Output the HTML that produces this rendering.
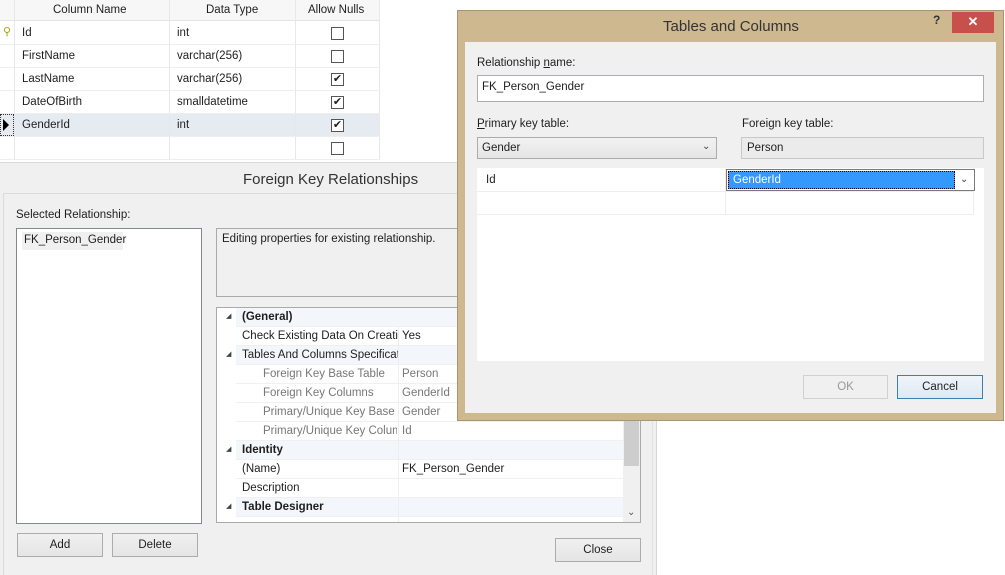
<!DOCTYPE html>
<html><head><style>
*{box-sizing:border-box;margin:0;padding:0}
body{width:1005px;height:575px;overflow:hidden;background:#fff;font-family:"Liberation Sans",sans-serif;font-size:11.5px;color:#1e1e1e;position:relative}
.a{position:absolute}
.t{position:absolute;white-space:nowrap;line-height:16px}
.cb{position:absolute;width:13px;height:13px;border:1px solid #555;background:#fff}
.btn{position:absolute;border:1px solid #acacac;background:linear-gradient(#f0f0f0,#e5e5e5);text-align:center;line-height:22px}
.pr{position:absolute;left:236px;width:387px;height:19px;line-height:19px;border-bottom:1px solid #f0f0f0}
.tri{position:absolute;left:10px;font-size:7px;color:#444}
.pn{overflow:hidden;width:156px}
</style></head><body>
<div class="a" style="left:0;top:0;width:380px;height:160px;background:#fff"></div>
<div class="a" style="left:0;top:0;width:380px;height:21px;background:#f7f7f7;border-bottom:1px solid #e4e4e4"></div>
<div class="t" style="left:53px;top:2px">Column Name</div>
<div class="t" style="left:206px;top:2px">Data Type</div>
<div class="t" style="left:308px;top:2px">Allow Nulls</div>
<div class="a" style="left:0;top:113px;width:380px;height:23px;background:#e6ebf2"></div>
<div class="a" style="left:14px;top:0;width:1px;height:160px;background:#e8e8e8"></div>
<div class="a" style="left:169px;top:0;width:1px;height:160px;background:#e8e8e8"></div>
<div class="a" style="left:295px;top:0;width:1px;height:160px;background:#e8e8e8"></div>
<div class="a" style="left:379px;top:0;width:1px;height:160px;background:#e8e8e8"></div>
<div class="a" style="left:0;top:44px;width:380px;height:1px;background:#eee"></div>
<div class="a" style="left:0;top:67px;width:380px;height:1px;background:#eee"></div>
<div class="a" style="left:0;top:90px;width:380px;height:1px;background:#eee"></div>
<div class="a" style="left:0;top:113px;width:380px;height:1px;background:#eee"></div>
<div class="a" style="left:0;top:136px;width:380px;height:1px;background:#eee"></div>
<div class="a" style="left:0;top:159px;width:380px;height:1px;background:#eee"></div>
<div class="t" style="left:3px;top:24px;color:#a8a000;font-size:11px">&#9906;</div>
<div class="a" style="left:0;top:114px;width:14px;height:22px;border:1px dotted #333"></div>
<div class="a" style="left:3px;top:119px;width:0;height:0;border-left:6px solid #000;border-top:6px solid transparent;border-bottom:6px solid transparent"></div>
<div class="t" style="left:22px;top:25px">Id</div><div class="t" style="left:177px;top:25px">int</div>
<div class="t" style="left:22px;top:48px">FirstName</div><div class="t" style="left:177px;top:48px">varchar(256)</div>
<div class="t" style="left:22px;top:71px">LastName</div><div class="t" style="left:177px;top:71px">varchar(256)</div>
<div class="t" style="left:22px;top:94px">DateOfBirth</div><div class="t" style="left:177px;top:94px">smalldatetime</div>
<div class="t" style="left:22px;top:117px">GenderId</div><div class="t" style="left:177px;top:117px">int</div>
<div class="cb" style="left:331px;top:27px"></div>
<div class="cb" style="left:331px;top:50px"></div>
<div class="cb" style="left:331px;top:73px;line-height:11px;font-size:11px;text-align:center">&#10004;</div>
<div class="cb" style="left:331px;top:96px;line-height:11px;font-size:11px;text-align:center">&#10004;</div>
<div class="cb" style="left:331px;top:119px;line-height:11px;font-size:11px;text-align:center">&#10004;</div>
<div class="cb" style="left:331px;top:142px"></div>

<div class="a" style="left:0;top:162px;width:657px;height:413px;background:#f0f0f0;border-top:1px solid #d8d8d8;border-right:1px solid #d6d6d6"></div>
<div class="a" style="left:652px;top:163px;width:1px;height:412px;background:#e2e2e2"></div>
<div class="t" style="left:243px;top:171px;font-size:15px;line-height:18px;color:#333">Foreign Key Relationships</div>
<div class="a" style="left:4px;top:193px;width:650px;height:1px;background:#dadada"></div>
<div class="a" style="left:3px;top:193px;width:1px;height:382px;background:#dadada"></div>
<div class="t" style="left:16px;top:207px">Selected Relationship:</div>
<div class="a" style="left:16px;top:228px;width:186px;height:296px;background:#fff;border:1px solid #828790"></div>
<div class="a" style="left:22px;top:232px;width:101px;height:18px;background:#f0f0f0"></div>
<div class="t" style="left:24px;top:232px">FK_Person_Gender</div>
<div class="a" style="left:216px;top:228px;width:245px;height:69px;background:#f0f0f0;border:1px solid #aaa;border-right:none"></div>
<div class="t" style="left:222px;top:231px">Editing properties for existing relationship.</div>
<div class="a" style="left:216px;top:307px;width:425px;height:216px;background:#fff;border:1px solid #aaa"></div>
<div class="a" style="left:623px;top:308px;width:17px;height:214px;background:#f0f0f0"></div>
<div class="a" style="left:624px;top:420px;width:15px;height:46px;background:#cdcdcd"></div>
<div class="t" style="left:627px;top:505px;font-size:10px;color:#555">&#8964;</div>
<div class="pr" style="top:308px;background:#f3f6fb"></div><div class="tri" style="top:312px;left:226px">&#9698;</div><div class="t" style="left:242px;top:309px;font-weight:bold">(General)</div>
<div class="pr" style="top:327px"></div><div class="t pn" style="left:242px;top:328px">Check Existing Data On Creation</div><div class="t" style="left:402px;top:328px">Yes</div>
<div class="pr" style="top:346px;background:#f3f6fb"></div><div class="tri" style="top:350px;left:226px">&#9698;</div><div class="t pn" style="left:242px;top:347px">Tables And Columns Specification</div>
<div class="pr" style="top:365px"></div><div class="t" style="left:263px;top:366px;color:#777">Foreign Key Base Table</div><div class="t" style="left:402px;top:366px;color:#777">Person</div>
<div class="pr" style="top:384px"></div><div class="t" style="left:263px;top:385px;color:#777">Foreign Key Columns</div><div class="t" style="left:402px;top:385px;color:#777">GenderId</div>
<div class="pr" style="top:403px"></div><div class="t pn" style="left:263px;top:404px;color:#777;width:134px">Primary/Unique Key Base Table</div><div class="t" style="left:402px;top:404px;color:#777">Gender</div>
<div class="pr" style="top:422px"></div><div class="t pn" style="left:263px;top:423px;color:#777;width:134px">Primary/Unique Key Columns</div><div class="t" style="left:402px;top:423px;color:#777">Id</div>
<div class="pr" style="top:441px;background:#f3f6fb"></div><div class="tri" style="top:445px;left:226px">&#9698;</div><div class="t" style="left:242px;top:442px;font-weight:bold">Identity</div>
<div class="pr" style="top:460px"></div><div class="t" style="left:242px;top:461px">(Name)</div><div class="t" style="left:402px;top:461px">FK_Person_Gender</div>
<div class="pr" style="top:479px"></div><div class="t" style="left:242px;top:480px">Description</div>
<div class="pr" style="top:498px;background:#f3f6fb"></div><div class="tri" style="top:502px;left:226px">&#9698;</div><div class="t" style="left:242px;top:499px;font-weight:bold">Table Designer</div>
<div class="a" style="left:398px;top:327px;width:1px;height:195px;background:#eee"></div>
<div class="btn" style="left:17px;top:533px;width:86px;height:24px">Add</div>
<div class="btn" style="left:112px;top:533px;width:86px;height:24px">Delete</div>
<div class="btn" style="left:555px;top:538px;width:86px;height:24px">Close</div>

<div class="a" style="left:457px;top:10px;width:547px;height:411px;background:#cdb88f;border:1px solid #a8966e"></div>
<div class="t" style="left:663px;top:18px;font-size:15px;line-height:18px;color:#333">Tables and Columns</div>
<div class="t" style="left:933px;top:12px;font-size:12px;font-weight:bold;color:#333">?</div>
<div class="a" style="left:952px;top:12px;width:42px;height:21px;background:#c7504c;color:#fff;text-align:center;line-height:20px;font-size:13px;font-weight:bold">&#10005;</div>
<div class="a" style="left:465px;top:42px;width:531px;height:371px;background:#f0f0f0"></div>
<div class="t" style="left:477px;top:55px">Relationship <u>n</u>ame:</div>
<div class="a" style="left:477px;top:75px;width:507px;height:27px;background:#fff;border:1px solid #abadb3"></div>
<div class="t" style="left:482px;top:79px">FK_Person_Gender</div>
<div class="t" style="left:477px;top:116px"><u>P</u>rimary key table:</div>
<div class="t" style="left:742px;top:116px">Foreign key table:</div>
<div class="a" style="left:477px;top:137px;width:240px;height:22px;background:linear-gradient(#f2f2f2,#e5e5e5);border:1px solid #acacac"></div>
<div class="t" style="left:482px;top:140px">Gender</div>
<div class="t" style="left:702px;top:139px;font-size:10px;color:#444">&#8964;</div>
<div class="a" style="left:741px;top:137px;width:243px;height:22px;background:#ebebeb;border:1px solid #c8c8c8"></div>
<div class="t" style="left:747px;top:140px">Person</div>
<div class="a" style="left:477px;top:168px;width:507px;height:193px;background:#fff"></div>
<div class="a" style="left:477px;top:191px;width:497px;height:1px;background:#eee"></div>
<div class="a" style="left:477px;top:214px;width:497px;height:1px;background:#eee"></div>
<div class="a" style="left:725px;top:168px;width:1px;height:46px;background:#eee"></div>
<div class="a" style="left:973px;top:168px;width:1px;height:46px;background:#eee"></div>
<div class="t" style="left:486px;top:172px">Id</div>
<div class="a" style="left:726px;top:169px;width:249px;height:22px;border:1px solid #7a7a7a;background:#fff"></div>
<div class="a" style="left:728px;top:171px;width:227px;height:18px;background:#3399ff;border:1px dotted #000"></div>
<div class="t" style="left:733px;top:172px;color:#fff">GenderId</div>
<div class="t" style="left:960px;top:172px;font-size:10px;color:#444">&#8964;</div>
<div class="btn" style="left:803px;top:375px;width:85px;height:24px;color:#999;border-color:#d0d0d0;background:#f0f0f0">OK</div>
<div class="btn" style="left:897px;top:375px;width:86px;height:24px;border-color:#3c7fb1;background:linear-gradient(#eef5fb,#dfe9f2)">Cancel</div>
</body></html>
